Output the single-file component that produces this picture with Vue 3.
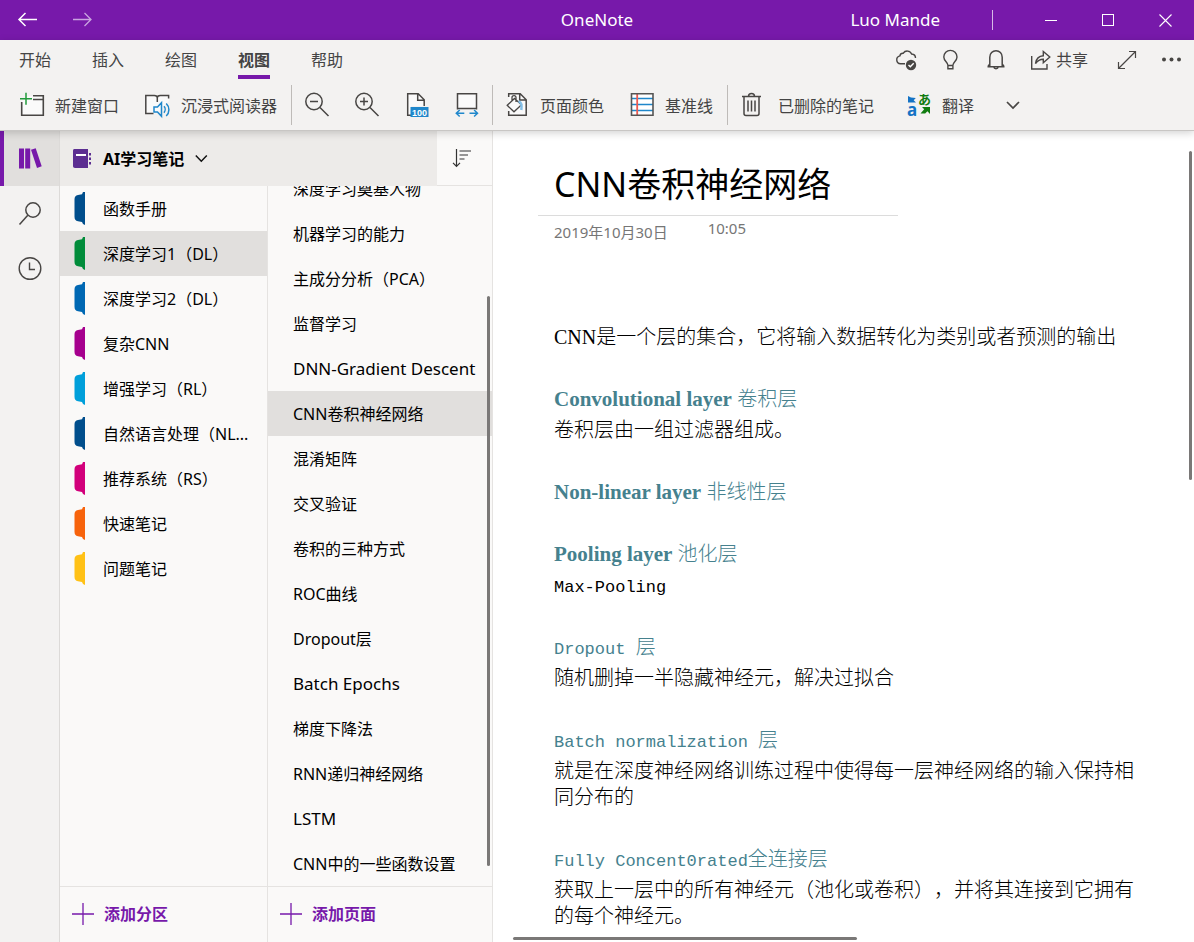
<script setup>
import { ref } from 'vue'

const tabs = ['开始', '插入', '绘图', '视图', '帮助']
const activeTab = ref('视图')

const sections = [
  { name: '函数手册', color: '#004e8c' },
  { name: '深度学习1（DL）', color: '#018c3a' },
  { name: '深度学习2（DL）', color: '#0068b3' },
  { name: '复杂CNN', color: '#a6008e' },
  { name: '增强学习（RL）', color: '#009fda' },
  { name: '自然语言处理（NL...', color: '#004e8c' },
  { name: '推荐系统（RS）', color: '#d2007b' },
  { name: '快速笔记', color: '#f7630c' },
  { name: '问题笔记', color: '#ffc116' }
]
const activeSection = ref('深度学习1（DL）')

const pages = [
  '深度学习奠基人物', '机器学习的能力', '主成分分析（PCA）', '监督学习',
  'DNN-Gradient Descent', 'CNN卷积神经网络', '混淆矩阵', '交叉验证',
  '卷积的三种方式', 'ROC曲线', 'Dropout层', 'Batch Epochs', '梯度下降法',
  'RNN递归神经网络', 'LSTM', 'CNN中的一些函数设置'
]
const activePage = ref('CNN卷积神经网络')
const isLatin = (text) => /^[\w\s-]+$/.test(text)

const notes = [
  { latin: 'Convolutional layer', face: 'serif', cjk: ' 卷积层', body: '卷积层由一组过滤器组成。' },
  { latin: 'Non-linear layer', face: 'serif', cjk: ' 非线性层' },
  { latin: 'Pooling layer', face: 'serif', cjk: ' 池化层', code: 'Max-Pooling' },
  { latin: 'Dropout ', face: 'mono', cjk: '层', body: '随机删掉一半隐藏神经元，解决过拟合' },
  { latin: 'Batch normalization ', face: 'mono', cjk: '层', body: '就是在深度神经网络训练过程中使得每一层神经网络的输入保持相同分布的' },
  { latin: 'Fully Concent0rated', face: 'mono', cjk: '全连接层', body: '获取上一层中的所有神经元（池化或卷积），并将其连接到它拥有的每个神经元。' }
]
</script>

<template>
  <div class="app" lang="zh-CN">
    <header class="titlebar">
      <div class="history">
        <button aria-label="后退">
          <svg width="20" height="16" viewBox="0 0 20 16" fill="none" stroke="#fff" stroke-width="1.5"><path d="M19 7.500H1M7.500 1 1 7.500 7.500 14" /></svg>
        </button>
        <button aria-label="前进">
          <svg width="20" height="16" viewBox="0 0 20 16" fill="none" stroke="#c9a4e0" stroke-width="1.300"><path d="M0 7.500h18M11.500 1 18 7.500 11.500 14" /></svg>
        </button>
      </div>
      <span class="app-name">OneNote</span>
      <div class="window-side">
        <span class="user">Luo Mande</span>
        <span class="bar"></span>
        <div class="window-buttons">
          <button aria-label="最小化"><svg width="13" height="13" viewBox="0 0 13 13" stroke="#fff"><path d="M0 6.500h12" /></svg></button>
          <button aria-label="最大化"><svg width="13" height="13" viewBox="0 0 13 13" fill="none" stroke="#fff"><rect x=".5" y=".5" width="11" height="11" /></svg></button>
          <button aria-label="关闭"><svg width="13" height="13" viewBox="0 0 13 13" stroke="#fff" stroke-width="1.100"><path d="m.5.5 12 12M12.500.5l-12 12" /></svg></button>
        </div>
      </div>
    </header>

    <div class="ribbon">
      <div class="tab-row">
        <nav class="tabs">
          <button v-for="tab in tabs" :key="tab" :class="{ active: tab === activeTab }" @click="activeTab = tab">{{ tab }}</button>
        </nav>
        <div class="tab-tools">
          <button aria-label="同步状态">
            <svg width="22" height="22" viewBox="0 0 22 22" fill="none" stroke="#484644" stroke-width="1.400"><path d="M10 14.800H5.500a4 4 0 0 1-.6-7.900 3.200 3.200 0 0 1 3.400-2.700 4.700 4.700 0 0 1 8.300.8c2.300.2 3.900 1.900 3.900 4" /><circle cx="16" cy="16" r="5.200" fill="#484644" stroke="none" /><path d="m13.500 16 1.800 1.800 3.400-3.500" stroke="#fff" /></svg>
          </button>
          <button aria-label="操作提示">
            <svg width="22" height="22" viewBox="0 0 22 22" fill="none" stroke="#484644" stroke-width="1.400"><path d="M7.900 16.300c0-3-4.100-4.300-4.100-8.300a6.600 6.600 0 0 1 13.200 0c0 4-4.100 5.300-4.100 8.300v3.500h-5zM7.900 16.500h5" /></svg>
          </button>
          <button aria-label="通知">
            <svg width="22" height="22" viewBox="0 0 22 22" fill="none" stroke="#484644" stroke-width="1.500"><path d="M2.500 17.800h17M4.800 17.500V8.200C4.800 4.500 7.500 1.700 11 1.700s6.200 2.800 6.200 6.500v9.300M8.800 18c.3 2.300 4.100 2.300 4.400 0M3 17.500l1.800-2.700M19 17.500l-1.800-2.700" /></svg>
          </button>
          <button class="share">
            <svg width="22" height="22" viewBox="0 0 22 22" fill="none" stroke="#484644" stroke-width="1.400"><path d="M1.700 7v13H17v-5M5.500 14.500c.8-5.300 3.500-7.500 7.800-7.700V2.500L19.800 8l-6.500 5.800v-3.600c-3.200 0-5.400.9-7.800 4.300Z" /></svg>
            <span>共享</span>
          </button>
          <button aria-label="全屏">
            <svg width="22" height="22" viewBox="0 0 22 22" fill="none" stroke="#484644" stroke-width="1.200"><path d="M2.500 19.500 19.500 2.500M13 2.500h6.500V9M2.500 13v6.500H9" /></svg>
          </button>
          <button aria-label="更多">
            <svg width="22" height="22" viewBox="0 0 22 22" fill="#484644"><circle cx="3" cy="10.500" r="2" /><circle cx="10.500" cy="10.500" r="2" /><circle cx="18" cy="10.500" r="2" /></svg>
          </button>
        </div>
      </div>

      <div class="tools">
        <div class="group first">
          <button>
            <svg width="26" height="26" viewBox="0 0 26 26" fill="none"><path d="M2.800 10v13.300h21.400V3.700H10" fill="#fafafa" /><path d="M2.700 10v13.300h21.600V3.700H14M14 7.500h10" stroke="#484644" stroke-width="1.600" /><path d="M7 .8v12M1 6.800h12" stroke="#219a3b" stroke-width="1.500" /></svg>
            <span>新建窗口</span>
          </button>
          <button>
            <svg width="26" height="26" viewBox="0 0 26 26" fill="none"><path d="M.8 3.500h8.500c1.500 0 3 .8 3 2.300 0-1.500 1.400-2.300 3-2.300h8.500V9L12 21.500H.8Z" fill="#fafafa" /><path d="M8.500 21.500H.8v-18h8.500c1.700 0 3 .8 3 2.300V10M12.300 5.800c0-1.500 1.400-2.300 3-2.300h8.300v3" stroke="#484644" stroke-width="1.500" /><path d="M9 15h3.500l4-4.300v13.600l-4-4.300H9ZM19 14.300c1.500 1.500 1.500 4.500 0 6.500M21.200 11.500c3.600 3.300 3.600 9.200 0 12.500" stroke="#1f87cb" stroke-width="1.500" /></svg>
            <span>沉浸式阅读器</span>
          </button>
        </div>
        <div class="group icons">
          <button aria-label="缩小"><svg width="26" height="26" viewBox="0 0 26 26" fill="none" stroke="#484644" stroke-width="1.500"><circle cx="10" cy="9.500" r="8.200" /><path d="m16 15.500 8.500 8.500M6 9.500h8" /></svg></button>
          <button aria-label="放大"><svg width="26" height="26" viewBox="0 0 26 26" fill="none" stroke="#484644" stroke-width="1.500"><circle cx="10" cy="9.500" r="8.200" /><path d="m16 15.500 8.500 8.500M6 9.500h8M10 5.500v8" /></svg></button>
          <button aria-label="缩放到 100%"><svg width="26" height="26" viewBox="0 0 26 26" fill="none"><path d="M3.700 23.500V1.700h10.500l6 6V14h-13v9.500z" fill="#fafafa" /><path d="M7 23.300H3.700V1.700h10.500l6 6V14M13.700 1.700v6.500h6.500" stroke="#484644" stroke-width="1.500" /><rect x="6.500" y="15" width="18" height="10" fill="#1f87cb" /><text x="15.500" y="23.500" class="zoom-label">100</text></svg></button>
          <button aria-label="页面宽度"><svg width="26" height="26" viewBox="0 0 26 26" fill="none"><path d="M3.500 16.500V1.700h19v14.800" fill="#fafafa" /><path d="M3.500 17.500V1.700h19v15.800M3.500 16.500h19" stroke="#484644" stroke-width="1.500" /><path d="M2.300 21.300h8M5.700 18 2.300 21.300l3.400 3.200M15.500 21.300h8M20.100 18l3.400 3.300-3.400 3.200" stroke="#1f87cb" stroke-width="1.500" /></svg></button>
        </div>
        <div class="group middle">
          <button class="fill">
            <svg width="26" height="26" viewBox="0 0 26 26" fill="none"><path d="M4.700 5V1.700h11.500l6 6v15.600H4.700V19" fill="#fafafa" /><path d="M4.700 5V1.700h11.500l6 6v15.600H4.700V19M15.700 1.700V8h6" stroke="#484644" stroke-width="1.500" /><path d="m10.500 6.500 7 6.300-7.500 7-6.800-6.500ZM8 9V5.500c0-2.500 4-2.500 4 0V10" fill="#fafafa" stroke="#484644" stroke-width="1.300" /><path d="M14.500 9.500c3 .5 3.500 4 2.800 8.500" stroke="#83bfe7" stroke-width="2.500" /></svg>
            <span>页面颜色</span>
          </button>
          <button>
            <svg width="26" height="26" viewBox="0 0 26 26" fill="none"><path d="M2.500 1.700h21.500v21.600H2.500Z" fill="#fff" /><path d="M2.500 6.500H24M2.500 12.500H24M2.500 18.500H24" stroke="#1f87cb" stroke-width="1.500" /><path d="M8.200 2v21" stroke="#ed5a50" stroke-width="1.800" /><path d="M2.500 1.700h21.500v21.600H2.500Z" stroke="#555" stroke-width="1.600" /></svg>
            <span>基准线</span>
          </button>
        </div>
        <div class="group last">
          <button class="trash">
            <svg width="26" height="26" viewBox="0 0 26 26" fill="none" stroke="#484644" stroke-width="1.500"><path d="M3 4.500h19M5 4.500v17c0 1.100.8 2 2 2h11c1.200 0 2-.9 2-2v-17M9.500 4.500c0-4 6-4 6 0M9 8.500v11M12.500 8.500v11M16 8.500v11" /></svg>
            <span>已删除的笔记</span>
          </button>
          <button>
            <svg width="26" height="26" viewBox="0 0 26 26" fill="none"><path d="M2 4v6.500h8L7.700 8.300 9.800 6 5 5.500ZM2 10.500h3.500" fill="#1473c5" /><text x="1" y="24" class="latin-glyph">a</text><text x="12" y="12" class="kana-glyph">あ</text><path d="M24 15h-8l2.200 2.300-3.700 4.200h4.700l2.200-2.200L24 22Z" fill="#107c10" /></svg>
            <span>翻译</span>
          </button>
          <button aria-label="更多选项"><svg width="14" height="9" viewBox="0 0 14 9" fill="none" stroke="#484644" stroke-width="1.700"><path d="m1 1 6 6 6-6" /></svg></button>
        </div>
      </div>
    </div>

    <main class="workspace">
      <nav class="rail">
        <button class="current" aria-label="笔记本">
          <svg width="24" height="24" viewBox="0 0 24 24" fill="#7719aa"><path d="M1 1.500h5v20H1zM7.200 1.500h5v20h-5zM13 2.700l4.700-1.500 6 18-4.700 1.700z" /></svg>
        </button>
        <button aria-label="搜索">
          <svg width="24" height="24" viewBox="0 0 24 24" fill="none" stroke="#484644" stroke-width="1.500"><circle cx="15" cy="8" r="7.200" /><path d="M9.800 13.200 1.500 22.500" /></svg>
        </button>
        <button aria-label="最近的笔记">
          <svg width="24" height="24" viewBox="0 0 24 24" fill="none" stroke="#484644" stroke-width="1.400"><circle cx="12" cy="11.500" r="10.800" /><path d="M11.500 5.500v7h5.500" /></svg>
        </button>
      </nav>

      <aside class="panel">
        <div class="panel-head">
          <button class="notebook">
            <svg width="20" height="20" viewBox="0 0 20 20"><path d="M1 1.500C1 .6 1.600 0 2.500 0H16v19H3c-1.200 0-2-.8-2-2z" fill="#5c2e91" /><path d="M4 5h10v2H4z" fill="#fff" /><path d="M17 4h2v2.500h-2zM17 8.500h2V11h-2zM17 13h2v2.500h-2z" fill="#5c2e91" /></svg>
            <span>AI学习笔记</span>
            <svg width="13" height="9" viewBox="0 0 13 9" fill="none" stroke="#111" stroke-width="1.500"><path d="m.8 1.500 5.500 5.700 5.500-5.700" /></svg>
          </button>
          <button class="sort" aria-label="排序">
            <svg width="20" height="20" viewBox="0 0 20 20" fill="none" stroke="#333" stroke-width="1.200"><path d="M4.500 1v17M1 14.800l3.500 3.500L8 14.800M7.500 3h11.500M7.500 7H16M7.500 11h5" /></svg>
          </button>
        </div>
        <div class="columns">
          <div class="column">
            <ul class="list">
              <li v-for="s in sections" :key="s.name">
                <button :class="{ selected: s.name === activeSection }" @click="activeSection = s.name">
                  <svg width="12" height="33" viewBox="0 0 12 33" :fill="s.color"><path d="M11 0H9L8 2.300 4 3C1.500 3.500.5 5 .5 7.500v17c0 3 1 4.200 3.500 4.700l4 .8L9 32l2 1z" /></svg>
                  <span>{{ s.name }}</span>
                </button>
              </li>
            </ul>
            <button class="add"><svg width="22" height="22" viewBox="0 0 22 22" stroke="#7719aa" stroke-width="1.300"><path d="M11 0v22M0 11h22" /></svg><span>添加分区</span></button>
          </div>
          <div class="column">
            <ul class="list pages">
              <li v-for="p in pages" :key="p">
                <button :class="{ selected: p === activePage, latin: isLatin(p) }" @click="activePage = p"><span>{{ p }}</span></button>
              </li>
            </ul>
            <i class="thumb page-thumb"></i>
            <button class="add"><svg width="22" height="22" viewBox="0 0 22 22" stroke="#7719aa" stroke-width="1.300"><path d="M11 0v22M0 11h22" /></svg><span>添加页面</span></button>
          </div>
        </div>
      </aside>

      <article class="canvas">
        <h1>CNN卷积神经网络</h1>
        <div class="stamp"><span>2019年10月30日</span><time>10:05</time></div>
        <div class="content">
          <p><span class="lead">CNN</span>是一个层的集合，它将输入数据转化为类别或者预测的输出</p>
          <section v-for="n in notes" :key="n.latin">
            <h2><span :class="n.face">{{ n.latin }}</span>{{ n.cjk }}</h2>
            <p v-if="n.body">{{ n.body }}</p>
            <p v-if="n.code"><span class="mono">{{ n.code }}</span></p>
          </section>
        </div>
        <i class="thumb v-thumb"></i>
        <i class="thumb h-thumb"></i>
      </article>
    </main>
  </div>
</template>

<style>
body { margin: 0; }
</style>

<style scoped>
.app {
  display: flex;
  flex-direction: column;
  height: 100vh;
  overflow: hidden;
  background: #fff;
  color: #000;
  font-family: "Noto Sans", "Noto Sans CJK SC", sans-serif;
  font-size: 16px;
  line-height: 24px;
  text-spacing-trim: space-all;
}
button {
  display: flex;
  align-items: center;
  padding: 0;
  border: 0;
  background: none;
  color: inherit;
  font: inherit;
  white-space: nowrap;
  cursor: pointer;
}
svg { display: block; flex: none; overflow: visible; }

.titlebar {
  display: grid;
  grid-template-columns: 1fr auto 1fr;
  align-items: center;
  flex: none;
  height: 40px;
  background: #7719aa;
  color: #fff;
  font-size: 17px;
}
.history { display: flex; gap: 35px; padding-left: 18px; }
.window-side { display: flex; justify-content: flex-end; align-items: center; }
.bar { width: 1px; height: 20px; margin: 0 30px 0 52px; background: #d6bae6; }
.window-buttons { display: flex; }
.window-buttons button { justify-content: center; width: 57px; height: 40px; }

.ribbon {
  position: relative;
  z-index: 1;
  flex: none;
  border-bottom: 1px solid #c8c6c4;
  background: #f3f2f1;
  box-shadow: 0 2px 8px rgba(0, 0, 0, .18);
  color: #444;
}
.tab-row { display: flex; justify-content: space-between; height: 40px; }
.tabs { display: flex; gap: 41px; padding-left: 19px; }
.tabs button { height: 39px; padding-top: 4px; border-bottom: 4px solid transparent; }
.tabs .active { border-color: #7719aa; font-weight: 700; }
.tab-tools { display: flex; align-items: center; gap: 23px; padding-right: 11px; }
.share { gap: 4px; padding-right: 5px; }
.tools { display: flex; height: 50px; }
.group { display: flex; align-items: center; height: 40px; margin-top: 5px; }
.group + .group { border-left: 1px solid #bebbb8; }
.group button { gap: 10px; }
.group button span { padding-top: 2px; }
.first { gap: 26px; padding: 0 14px 0 19px; }
.icons { gap: 24px; padding: 0 12px; }
.middle { gap: 25px; padding: 0 14px 0 11px; }
.last { gap: 32px; padding-left: 11px; }
.group .trash { gap: 13px; }
.zoom-label { fill: #fff; font: 700 9px "Liberation Sans", sans-serif; text-anchor: middle; }
.latin-glyph { fill: #1473c5; font: 700 17px "Noto Sans", sans-serif; }
.kana-glyph { fill: #107c10; font: 700 13px "Noto Sans CJK JP", sans-serif; }

.workspace { display: flex; flex: 1; min-height: 0; }
.rail { flex: none; width: 59px; border-right: 1px solid #dcdad8; background: #f3f2f1; }
.rail button { justify-content: center; width: 100%; height: 55px; border-left: 4px solid transparent; padding-right: 3px; }
.rail .current { border-color: #7719aa; background: #e1dfdd; }
.panel { display: flex; flex-direction: column; flex: none; width: 432px; border-right: 1px solid #e5e3e1; background: #faf9f8; }
.panel-head { display: flex; flex: none; height: 55px; }
.notebook { flex: 1; gap: 11px; padding-left: 12px; background: #edebe9; font-weight: 700; }
.sort { justify-content: center; width: 55px; border-bottom: 1px solid #e5e3e1; padding-right: 6px; }
.columns { display: grid; grid-template-columns: 208px 1fr; flex: 1; min-height: 0; }
.column { position: relative; display: flex; flex-direction: column; min-height: 0; min-width: 0; }
.column:first-child { border-right: 1px solid #e5e3e1; }
.list { display: flex; flex-direction: column; flex: 1; min-height: 0; margin: 0; padding: 0; overflow: hidden; list-style: none; }
.pages { justify-content: flex-end; }
.list li { flex: none; }
.list button { gap: 17px; width: 100%; height: 45px; padding: 0 12px 0 14px; }
.pages button { padding-left: 25px; }
.list .latin { font-size: 17px; }
.list .selected { background: #e1dfdd; }
.add { flex: none; gap: 10px; height: 56px; padding: 0 0 2px 12px; border-top: 1px solid #e5e3e1; color: #7719aa; font-weight: 700; }

.thumb { position: absolute; border-radius: 2px; background: #7a7877; }
.page-thumb { top: 110px; right: 2px; bottom: 76px; width: 3px; }
.v-thumb { top: 20px; right: 2px; width: 3px; height: 329px; }
.h-thumb { left: 20px; bottom: 2px; width: 344px; height: 3px; }

.canvas { position: relative; flex: 1; min-width: 0; overflow: hidden; padding: 23px 50px 0 45px; }
h1 {
  width: 344px;
  max-width: 100%;
  margin: 0;
  padding: 0 0 1px 16px;
  border-bottom: 1px solid #dcdcdc;
  font-size: 34px;
  font-weight: 400;
  line-height: 60px;
}
.stamp { display: flex; gap: 40px; padding-left: 16px; color: #767676; font-size: 15px; }
.stamp span { padding-top: 4px; }
.content { padding: 80px 0 0 16px; font-size: 20px; font-weight: 300; line-height: 26px; }
.content section { margin-top: 36px; }
.content h2 { height: 26px; margin: 0; color: #45818e; font: inherit; white-space: pre-wrap; }
.content p { margin: 0; }
.content h2 + p { margin-top: 5px; }
.content span { line-height: 16px; }
.serif { font-family: "Liberation Serif", serif; font-size: 21px; font-weight: 700; }
.lead { font-family: "Liberation Serif", serif; font-weight: 400; }
.mono { font-family: "Liberation Mono", monospace; font-size: 17px; font-weight: 400; }
</style>
